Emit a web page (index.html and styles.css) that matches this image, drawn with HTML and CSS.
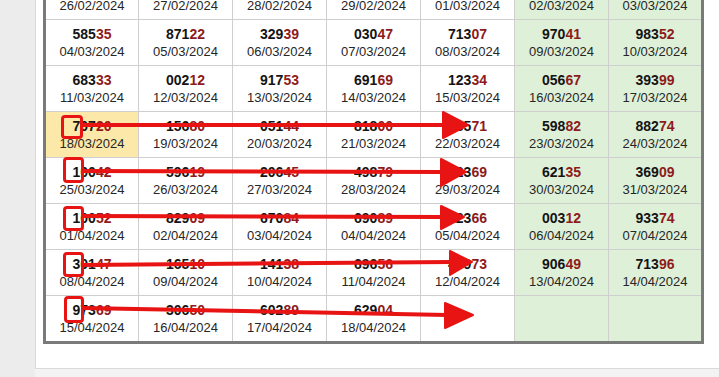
FILE: index.html
```html
<!DOCTYPE html>
<html>
<head>
<meta charset="utf-8">
<link rel="stylesheet" href="styles.css">
</head>
<body>
<div class="layout">
  <div class="side"></div>
  <div class="panel">
    <table class="results">
      <colgroup><col><col><col><col><col><col class="we"><col class="we"></colgroup>
      <tr>
        <td><div class="n">481<span class="r">27</span></div><div class="d">26/02/2024</div></td>
        <td><div class="n">093<span class="r">58</span></div><div class="d">27/02/2024</div></td>
        <td><div class="n">274<span class="r">13</span></div><div class="d">28/02/2024</div></td>
        <td><div class="n">660<span class="r">82</span></div><div class="d">29/02/2024</div></td>
        <td><div class="n">315<span class="r">40</span></div><div class="d">01/03/2024</div></td>
        <td class="g"><div class="n">528<span class="r">61</span></div><div class="d">02/03/2024</div></td>
        <td class="g"><div class="n">807<span class="r">95</span></div><div class="d">03/03/2024</div></td>
      </tr>
      <tr>
        <td><div class="n">585<span class="r">35</span></div><div class="d">04/03/2024</div></td>
        <td><div class="n">871<span class="r">22</span></div><div class="d">05/03/2024</div></td>
        <td><div class="n">329<span class="r">39</span></div><div class="d">06/03/2024</div></td>
        <td><div class="n">030<span class="r">47</span></div><div class="d">07/03/2024</div></td>
        <td><div class="n">713<span class="r">07</span></div><div class="d">08/03/2024</div></td>
        <td class="g"><div class="n">970<span class="r">41</span></div><div class="d">09/03/2024</div></td>
        <td class="g"><div class="n">983<span class="r">52</span></div><div class="d">10/03/2024</div></td>
      </tr>
      <tr>
        <td><div class="n">683<span class="r">33</span></div><div class="d">11/03/2024</div></td>
        <td><div class="n">002<span class="r">12</span></div><div class="d">12/03/2024</div></td>
        <td><div class="n">917<span class="r">53</span></div><div class="d">13/03/2024</div></td>
        <td><div class="n">691<span class="r">69</span></div><div class="d">14/03/2024</div></td>
        <td><div class="n">123<span class="r">34</span></div><div class="d">15/03/2024</div></td>
        <td class="g"><div class="n">056<span class="r">67</span></div><div class="d">16/03/2024</div></td>
        <td class="g"><div class="n">393<span class="r">99</span></div><div class="d">17/03/2024</div></td>
      </tr>
      <tr>
        <td class="hl"><div class="n">707<span class="r">20</span></div><div class="d">18/03/2024</div></td>
        <td><div class="n">156<span class="r">80</span></div><div class="d">19/03/2024</div></td>
        <td><div class="n">051<span class="r">44</span></div><div class="d">20/03/2024</div></td>
        <td><div class="n">818<span class="r">00</span></div><div class="d">21/03/2024</div></td>
        <td><div class="n">385<span class="r">71</span></div><div class="d">22/03/2024</div></td>
        <td class="g"><div class="n">598<span class="r">82</span></div><div class="d">23/03/2024</div></td>
        <td class="g"><div class="n">882<span class="r">74</span></div><div class="d">24/03/2024</div></td>
      </tr>
      <tr>
        <td><div class="n">100<span class="r">42</span></div><div class="d">25/03/2024</div></td>
        <td><div class="n">596<span class="r">19</span></div><div class="d">26/03/2024</div></td>
        <td><div class="n">206<span class="r">45</span></div><div class="d">27/03/2024</div></td>
        <td><div class="n">498<span class="r">79</span></div><div class="d">28/03/2024</div></td>
        <td><div class="n">523<span class="r">69</span></div><div class="d">29/03/2024</div></td>
        <td class="g"><div class="n">621<span class="r">35</span></div><div class="d">30/03/2024</div></td>
        <td class="g"><div class="n">369<span class="r">09</span></div><div class="d">31/03/2024</div></td>
      </tr>
      <tr>
        <td><div class="n">100<span class="r">52</span></div><div class="d">01/04/2024</div></td>
        <td><div class="n">829<span class="r">09</span></div><div class="d">02/04/2024</div></td>
        <td><div class="n">670<span class="r">84</span></div><div class="d">03/04/2024</div></td>
        <td><div class="n">690<span class="r">89</span></div><div class="d">04/04/2024</div></td>
        <td><div class="n">123<span class="r">66</span></div><div class="d">05/04/2024</div></td>
        <td class="g"><div class="n">003<span class="r">12</span></div><div class="d">06/04/2024</div></td>
        <td class="g"><div class="n">933<span class="r">74</span></div><div class="d">07/04/2024</div></td>
      </tr>
      <tr>
        <td><div class="n">301<span class="r">47</span></div><div class="d">08/04/2024</div></td>
        <td><div class="n">165<span class="r">10</span></div><div class="d">09/04/2024</div></td>
        <td><div class="n">141<span class="r">38</span></div><div class="d">10/04/2024</div></td>
        <td><div class="n">696<span class="r">56</span></div><div class="d">11/04/2024</div></td>
        <td><div class="n">459<span class="r">73</span></div><div class="d">12/04/2024</div></td>
        <td class="g"><div class="n">906<span class="r">49</span></div><div class="d">13/04/2024</div></td>
        <td class="g"><div class="n">713<span class="r">96</span></div><div class="d">14/04/2024</div></td>
      </tr>
      <tr>
        <td><div class="n">973<span class="r">69</span></div><div class="d">15/04/2024</div></td>
        <td><div class="n">306<span class="r">50</span></div><div class="d">16/04/2024</div></td>
        <td><div class="n">602<span class="r">89</span></div><div class="d">17/04/2024</div></td>
        <td><div class="n">629<span class="r">04</span></div><div class="d">18/04/2024</div></td>
        <td></td>
        <td class="g"></td>
        <td class="g"></td>
      </tr>
    </table>
  </div>
</div>

<svg class="marks" width="719" height="377" viewBox="0 0 719 377">
  <g fill="none" stroke="#e81313" stroke-width="3" stroke-linejoin="round">
    <rect x="62.5" y="116.5" width="19" height="21" rx="2.5"/>
    <rect x="64.5" y="158.5" width="18" height="23" rx="2.5"/>
    <rect x="64.5" y="207.5" width="18" height="22" rx="2.5"/>
    <rect x="64.5" y="253.5" width="18" height="22" rx="2.5"/>
    <rect x="65.5" y="297.5" width="17" height="24" rx="2.5"/>
  </g>
  <g stroke="#e81313" stroke-width="4" stroke-linecap="butt">
    <line x1="83" y1="125" x2="446" y2="125"/>
    <line x1="83" y1="171" x2="443" y2="172"/>
    <line x1="83" y1="216" x2="443" y2="217"/>
    <line x1="83" y1="265" x2="452" y2="262"/>
    <line x1="83" y1="308" x2="447" y2="315"/>
  </g>
  <g fill="#e81313" stroke="#e81313" stroke-width="2" stroke-linejoin="round">
    <polygon points="443,112 443,138 468,125"/>
    <polygon points="441,159 441,186 466,172"/>
    <polygon points="441,206 441,229 464,217"/>
    <polygon points="450,251 450,275 472,262"/>
    <polygon points="445,303 445,328 473,315"/>
  </g>
</svg>
</body>
</html>
```

FILE: styles.css
```css
html, body {
  margin: 0;
  padding: 0;
}

body {
  background: #f3f3f3;
  font-family: "Liberation Sans", Arial, sans-serif;
}

.layout {
  display: flex;
  height: 377px;
  overflow: hidden;
}

.side {
  width: 35px;
  flex: none;
  background: #ececec;
}

.panel {
  align-self: flex-end;
  margin-bottom: 8px;
  width: 672px;
  flex: none;
  background: #fff;
  border: 1px solid #dadada;
  padding: 10px 4px 24px 7px;
}

.results {
  border-collapse: collapse;
  table-layout: fixed;
  width: 661px;
  border: 3px solid #7a7a7a;
}

.results td {
  border: 1px solid #cfcfcf;
  padding: 5px 0 4px;
  text-align: center;
  vertical-align: middle;
  height: 36px;
  box-sizing: content-box;
}

.results td.g {
  background: #dff0d8;
}

.results td.hl {
  background: #fce8a8;
}

.n {
  font-weight: bold;
  font-size: 14px;
  line-height: 18px;
  color: #141414;
}

.n .r {
  color: #8e1b1b;
}

.d {
  font-size: 13px;
  line-height: 18px;
  color: #262626;
}

.marks {
  position: absolute;
  top: 0;
  left: 0;
  pointer-events: none;
}
```
